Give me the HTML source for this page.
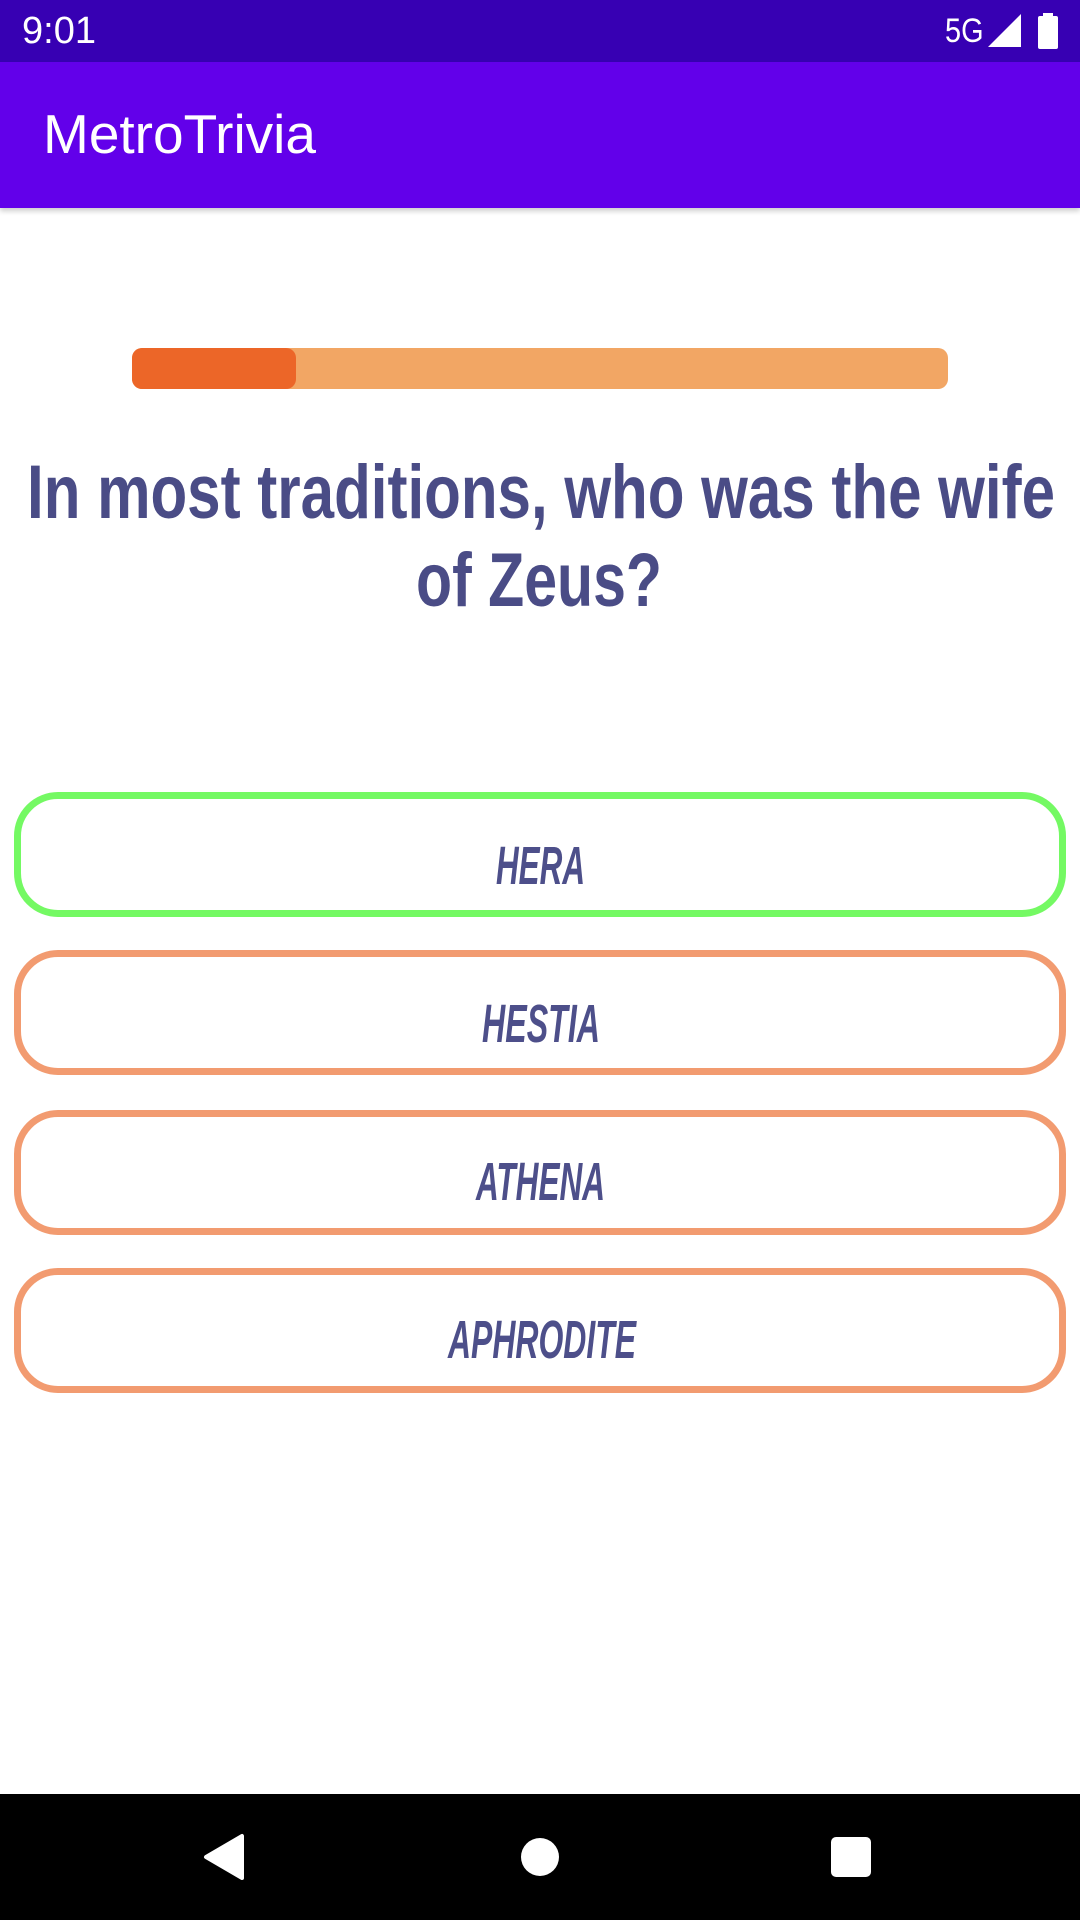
<!DOCTYPE html>
<html><head><meta charset="utf-8"><style>
*{margin:0;padding:0;box-sizing:border-box}
body{width:1080px;height:1920px;background:#fff;position:relative;overflow:hidden;font-family:"Liberation Sans",sans-serif}
.sb{position:absolute;top:0;left:0;width:1080px;height:62px;background:#3700b3;color:#fff}
.ab{position:absolute;top:62px;left:0;width:1080px;height:146px;background:#6200ea;box-shadow:0 3px 5px rgba(0,0,0,.2)}
.ab span{position:absolute;left:43px;top:40px;font-size:55px;color:#fff}
.pb{position:absolute;left:132px;top:348px;width:816px;height:41px;background:#f2a664;border-radius:10px}
.pf{position:absolute;left:132px;top:348px;width:164px;height:41px;background:#ec6628;border-radius:10px}
.btn{position:absolute;left:14px;width:1052px;height:125px;border:7px solid #f29b70;border-radius:44px}
.nav{position:absolute;top:1794px;left:0;width:1080px;height:126px;background:#000}
</style></head><body>
<div class="sb">
<div style="position:absolute;left:22px;top:10px;font-size:38px">9:01</div>
<div style="position:absolute;left:945px;top:12px;font-size:34px;transform:scaleX(.85);transform-origin:left">5G</div>
<svg style="position:absolute;left:988px;top:14px" width="34" height="34"><polygon points="33,0 33,33 0,33" fill="#fff"/></svg>
<svg style="position:absolute;left:1038px;top:13px" width="20" height="36"><rect x="5" y="0" width="10" height="4" fill="#fff"/><rect x="0" y="3" width="20" height="33" rx="2" fill="#fff"/></svg>
</div>
<div class="ab"><span>MetroTrivia</span></div>
<div class="pb"></div><div class="pf"></div>
<div class="btn" style="top:792px;border-color:#74f963"></div>
<div class="btn" style="top:950px"></div>
<div class="btn" style="top:1110px"></div>
<div class="btn" style="top:1268px"></div>
<svg style="position:absolute;left:0;top:0" width="1080" height="1600">
<g font-family="'Liberation Sans',sans-serif" font-weight="bold" font-size="76" fill="#4a4c86">
<text x="27" y="518" textLength="1028" lengthAdjust="spacingAndGlyphs">In most traditions, who was the wife</text>
<text x="416" y="606" textLength="246" lengthAdjust="spacingAndGlyphs">of Zeus?</text>
</g>
<g font-family="'Liberation Sans',sans-serif" font-weight="bold" font-style="italic" font-size="54" fill="#4d4f8a">
<text x="496" y="884" textLength="89" lengthAdjust="spacingAndGlyphs">HERA</text>
<text x="482" y="1042" textLength="118" lengthAdjust="spacingAndGlyphs">HESTIA</text>
<text x="476" y="1200" textLength="129" lengthAdjust="spacingAndGlyphs">ATHENA</text>
<text x="448" y="1358" textLength="188" lengthAdjust="spacingAndGlyphs">APHRODITE</text>
</g>
</svg>
<div class="nav">
<svg width="1080" height="126">
<polygon points="206,63 242,42 242,84" fill="#fff" stroke="#fff" stroke-width="4" stroke-linejoin="round"/>
<circle cx="540" cy="63" r="19" fill="#fff"/>
<rect x="831" y="43" width="40" height="40" rx="5" fill="#fff"/>
</svg></div>
</body></html>
